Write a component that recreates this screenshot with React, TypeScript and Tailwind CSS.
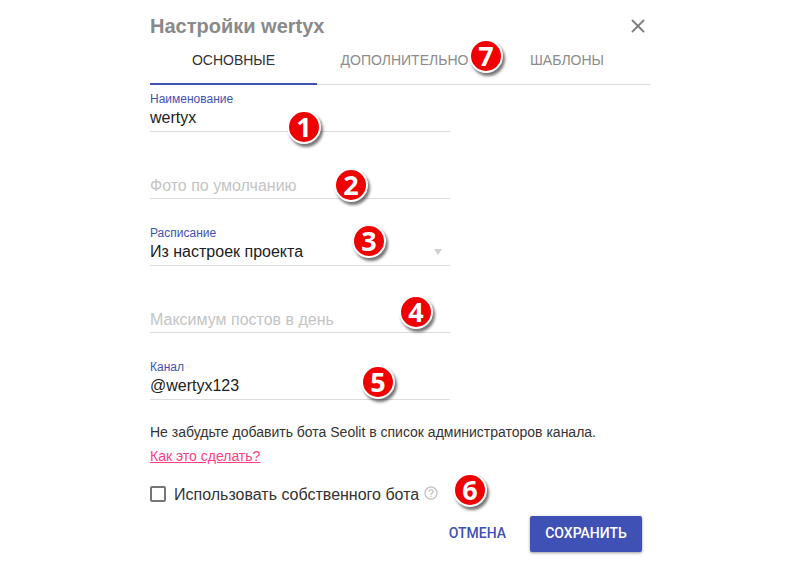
import { X } from "lucide-react";

const font = { fontFamily: "'Liberation Sans', Arial, sans-serif" };
const roboto = { fontFamily: "Roboto, sans-serif" };

function Field({ label, value, placeholder, arrow }: { label?: string; value?: string; placeholder?: string; arrow?: boolean }) {
  return (
    <div className="relative w-[300px] h-[47px] mb-[20px] border-b border-[#dcdcdc] flex flex-col justify-end">
      {label && <div className="text-[12px] leading-[14px] text-[#3f51b5]">{label}</div>}
      {value && <div className="text-[16px] leading-[19px] h-[25px] pt-[2px] text-[#212121]">{value}</div>}
      {placeholder && <div className="text-[16px] leading-[19px] h-[24px] pt-[2px] text-[#c4c4c4]">{placeholder}</div>}
      {arrow && <div className="absolute right-[8px] bottom-[10px] w-0 h-0 border-l-[4px] border-r-[4px] border-t-[6px] border-l-transparent border-r-transparent border-t-[#d0d0d0]" />}
    </div>
  );
}

function Badge({ n, className }: { n: number; className: string }) {
  return (
    <div
      className={
        "absolute w-[34px] h-[34px] rounded-full bg-[#f00000] border-2 border-white text-white font-bold text-[27px] leading-[29px] text-center shadow-[2px_3px_3px_rgba(0,0,0,0.55)] " +
        className
      }
      style={{ fontFamily: "'Open Sans', sans-serif" }}
    >
      {n}
    </div>
  );
}

export default function App() {
  return (
    <div className="relative w-[800px] h-[574px] bg-white overflow-hidden" style={font}>
      <div className="w-[500px] ml-[150px] pt-[15px]">
        <div className="flex items-center justify-between h-[22px]">
          <div className="text-[20px] leading-[22px] font-bold text-[#8a8a8a]">Настройки wertyx</div>
          <X className="w-[22px] h-[22px] text-[#7f7f7f] mr-[1px]" strokeWidth={2} />
        </div>

        <div className="flex h-[48px] border-b border-[#dcdcdc]">
          <div className="relative w-[167px] flex items-center justify-center text-[14px] text-[#333333]">
            ОСНОВНЫЕ
            <div className="absolute left-0 right-0 -bottom-px h-[2px] bg-[#3f51b5]" />
          </div>
          <div className="w-[167px] pl-[8px] flex items-center justify-center text-[14px] text-[#8c8c8c]">ДОПОЛНИТЕЛЬНО</div>
          <div className="w-[166px] flex items-center justify-center text-[14px] text-[#8c8c8c]">ШАБЛОНЫ</div>
        </div>

        <Field label="Наименование" value="wertyx" />
        <Field placeholder="Фото по умолчанию" />
        <Field label="Расписание" value="Из настроек проекта" arrow />
        <Field placeholder="Максимум постов в день" />
        <Field label="Канал" value="@wertyx123" />

        <div className="text-[14px] leading-[16px] text-[#333333] mt-[24px]">
          Не забудьте добавить бота Seolit в список администраторов канала.
        </div>
        <div className="text-[14px] leading-[16px] text-[#ff4081] underline mt-[8px]">Как это сделать?</div>

        <div className="flex items-center mt-[20px] h-[20px]">
          <div className="w-[16px] h-[16px] rounded-[2px] border-2 border-[#757575]" />
          <div className="text-[16px] leading-[20px] text-[#333333] ml-[8px] pt-[2px]">Использовать собственного бота</div>
          <svg className="ml-[4px] -mt-[3px]" width="16" height="16" viewBox="0 0 24 24" fill="#c4c4c4">
            <path d="M11 18h2v-2h-2v2zm1-16C6.48 2 2 6.48 2 12s4.48 10 10 10 10-4.48 10-10S17.52 2 12 2zm0 18c-4.41 0-8-3.59-8-8s3.59-8 8-8 8 3.59 8 8-3.59 8-8 8zm0-14c-2.21 0-4 1.79-4 4h2c0-1.1.9-2 2-2s2 .9 2 2c0 2-3 1.75-3 5h2c0-2.25 3-2.5 3-5 0-2.21-1.79-4-4-4z" />
          </svg>
        </div>

        <div className="flex items-center justify-end mt-[12px] pr-[8px]" style={roboto}>
          <div className="text-[14px] font-medium text-[#3f51b5] mr-[24px] pb-[2px]">ОТМЕНА</div>
          <div className="w-[112px] h-[36px] pb-[2px] rounded-[2px] bg-[#3f51b5] text-white text-[14px] font-medium flex items-center justify-center shadow-[0_1px_3px_rgba(0,0,0,0.4)]">
            СОХРАНИТЬ
          </div>
        </div>
      </div>

      <Badge n={1} className="left-[287px] top-[110px]" />
      <Badge n={2} className="left-[334px] top-[168px]" />
      <Badge n={3} className="left-[352px] top-[224px]" />
      <Badge n={4} className="left-[399px] top-[295px]" />
      <Badge n={5} className="left-[361px] top-[365px]" />
      <Badge n={6} className="left-[453px] top-[473px]" />
      <Badge n={7} className="left-[469px] top-[39px]" />
    </div>
  );
}
